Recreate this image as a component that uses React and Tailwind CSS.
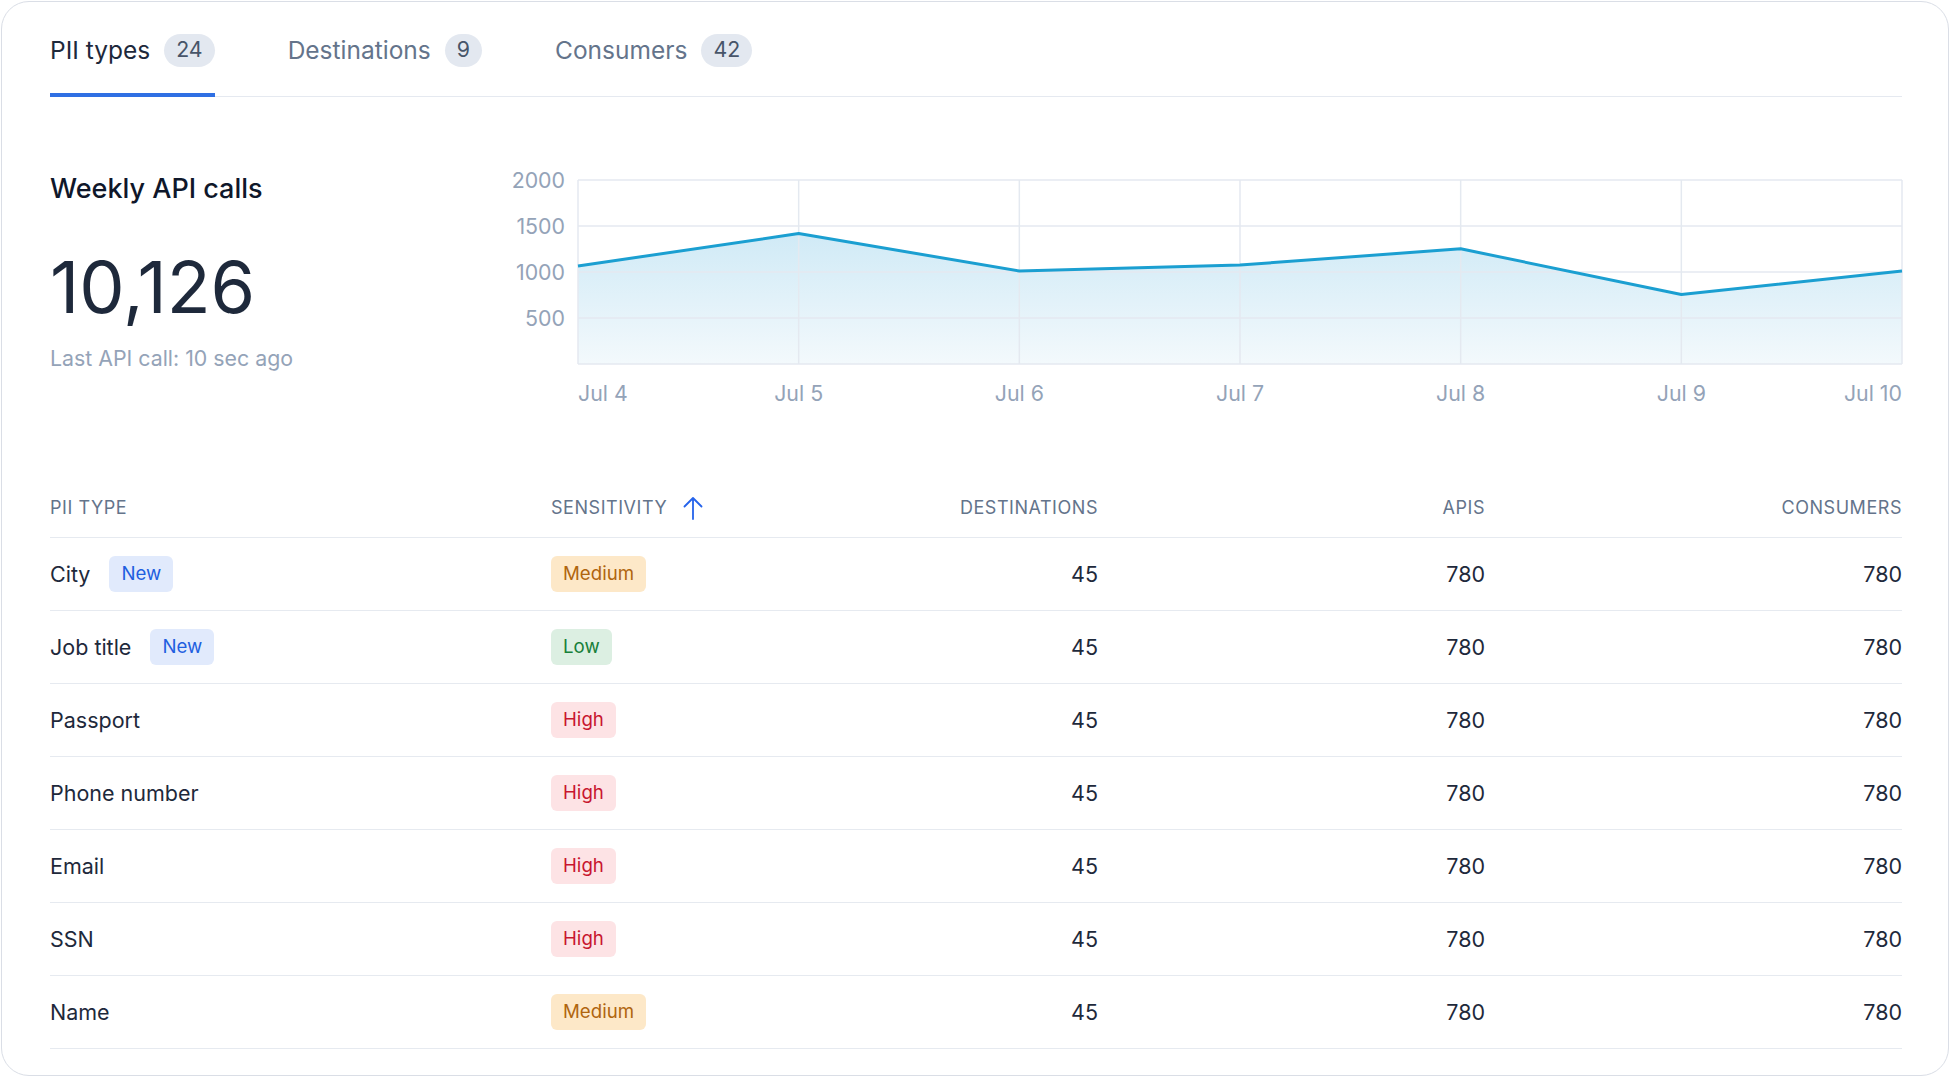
import React from "react";

const tabs = [
  { label: "PII types", count: 24, active: true },
  { label: "Destinations", count: 9 },
  { label: "Consumers", count: 42 },
];

const data = [
  { label: "Jul 4", v: 1065 },
  { label: "Jul 5", v: 1418 },
  { label: "Jul 6", v: 1011 },
  { label: "Jul 7", v: 1076 },
  { label: "Jul 8", v: 1252 },
  { label: "Jul 9", v: 756 },
  { label: "Jul 10", v: 1011 },
];

const rows = [
  { name: "City", isNew: true, s: "Medium" },
  { name: "Job title", isNew: true, s: "Low" },
  { name: "Passport", s: "High" },
  { name: "Phone number", s: "High" },
  { name: "Email", s: "High" },
  { name: "SSN", s: "High" },
  { name: "Name", s: "Medium" },
];

const sens = {
  Medium: "bg-[#fde8c8] text-[#b0650f]",
  Low: "bg-[#dcefe2] text-[#17803a]",
  High: "bg-[#fde3e5] text-[#c8162f]",
};

function SortArrow() {
  return (
    <svg width="20" height="24" viewBox="0 0 20 24" className="ml-[16px]" fill="none">
      <path
        d="M10 2 V23 M1.5 10.5 L10 2 L18.5 10.5"
        stroke="#2563eb"
        strokeWidth="1.8"
        strokeLinecap="round"
        strokeLinejoin="round"
      />
    </svg>
  );
}

function Chart() {
  const W = 1323;
  const H = 184;
  const pts = data.map((d, i) => [(i * W) / 6, H - (d.v / 2000) * H]);
  const line = pts.map((p, i) => `${i ? "L" : "M"}${p[0]},${p[1]}`).join(" ");
  const area = `${line} L${W},${H} L0,${H} Z`;
  return (
    <div className="flex-1 flex pt-[12px]">
      <div className="relative w-[60px] h-[184px] mr-[13px] text-[21.33px] leading-[24px] text-[#94a3b8]">
        {["2000", "1500", "1000", "500"].map((l, i) => (
          <div
            key={l}
            className="absolute right-0 -translate-y-1/2"
            style={{ top: `${i * 46}px` }}
          >
            {l}
          </div>
        ))}
      </div>
      <div className="flex-1 flex flex-col">
        <div className="h-[184px] w-full">
          <svg
            viewBox={`0 0 ${W} ${H}`}
            preserveAspectRatio="none"
            className="w-full h-full overflow-visible"
          >
            <defs>
              <linearGradient id="fillg" x1="0" y1="0" x2="0" y2="1">
                <stop offset="0%" stopColor="#d0eaf6" />
                <stop offset="100%" stopColor="#f3f9fc" />
              </linearGradient>
            </defs>
            <path d={area} fill="url(#fillg)" />
            {[0, 46, 92, 138, 184].map((y) => (
              <line
                key={y}
                x1="0"
                x2={W}
                y1={y}
                y2={y}
                stroke="#e4e9f0"
                strokeWidth="1.5"
                vectorEffect="non-scaling-stroke"
              />
            ))}
            {pts.map((p, i) => (
              <line
                key={i}
                x1={p[0]}
                x2={p[0]}
                y1="0"
                y2={H}
                stroke="#e4e9f0"
                strokeWidth="1.5"
                vectorEffect="non-scaling-stroke"
              />
            ))}
            <path
              d={line}
              fill="none"
              stroke="#1b9fd1"
              strokeWidth="3"
              strokeLinejoin="round"
              vectorEffect="non-scaling-stroke"
            />
          </svg>
        </div>
        <div className="relative h-[28px] mt-[15px] text-[21.33px] leading-[28px] text-[#94a3b8]">
          {data.map((d, i) => (
            <div
              key={d.label}
              className={
                i === 0
                  ? "absolute left-0"
                  : i === 6
                  ? "absolute right-0"
                  : "absolute -translate-x-1/2 whitespace-nowrap"
              }
              style={i > 0 && i < 6 ? { left: `${(i / 6) * 100}%` } : undefined}
            >
              {d.label}
            </div>
          ))}
        </div>
      </div>
    </div>
  );
}

export default function App() {
  return (
    <div
      className="h-screen w-full p-px bg-white"
      style={{ fontFamily: "Inter, 'Noto Sans', sans-serif" }}
    >
      <div className="h-full rounded-[28px] border border-[#dadee6] bg-white pl-[48px] pr-[46px] pt-[32px]">
        {/* Tabs */}
        <div className="flex gap-[73px] border-b border-[#e5e9f0]">
          {tabs.map((t) => (
            <div
              key={t.label}
              className={
                "flex items-center h-[63px] pb-[27px] -mb-px border-b-[4px] " +
                (t.active ? "border-[#2f6fe3]" : "border-transparent")
              }
            >
              <span
                className={
                  "text-[24.5px] leading-[32px] " +
                  (t.active ? "text-[#1e293b]" : "text-[#64748b]")
                }
              >
                {t.label}
              </span>
              <span className="ml-[14px] h-[33px] px-[12px] rounded-full bg-[#e3e8f0] text-[#475569] text-[21.33px] flex items-center justify-center">
                {t.count}
              </span>
            </div>
          ))}
        </div>

        {/* Stats + chart */}
        <div className="flex mt-[71px]">
          <div className="w-[455px] pt-[5px]">
            <div className="text-[27px] leading-[32px] font-medium text-[#0f172a]">
              Weekly API calls
            </div>
            <div className="mt-[46px] text-[72px] leading-[72px] text-[#1e293b]">
              10,126
            </div>
            <div className="mt-[21px] text-[21.33px] leading-[28px] text-[#94a3b8]">
              Last API call: 10 sec ago
            </div>
          </div>
          <Chart />
        </div>

        {/* Table */}
        <div className="mt-[71px]">
          <div className="grid grid-cols-[501px_299px_248px_387px_1fr] h-[60px] items-center border-b border-[#e6eaf0] text-[18px] tracking-[0.03em] uppercase text-[#64748b]">
            <div>PII type</div>
            <div className="flex items-center">
              <span>Sensitivity</span>
              <SortArrow />
            </div>
            <div className="text-right">Destinations</div>
            <div className="text-right">APIs</div>
            <div className="text-right">Consumers</div>
          </div>
          {rows.map((r) => (
            <div
              key={r.name}
              className="grid grid-cols-[501px_299px_248px_387px_1fr] h-[73px] items-center border-b border-[#e6eaf0] text-[21.5px] text-[#1e293b]"
            >
              <div className="flex items-center">
                <span>{r.name}</span>
                <>
                  {r.isNew && (
                    <span className="ml-[19px] h-[36px] px-[12px] rounded-[6px] bg-[#e1eafc] text-[#1f5fe0] text-[18.67px] flex items-center">
                      New
                    </span>
                  )}
                </>
              </div>
              <div>
                <span
                  className={
                    "inline-flex items-center h-[36px] px-[12px] rounded-[6px] text-[18.67px] " +
                    sens[r.s]
                  }
                >
                  {r.s}
                </span>
              </div>
              <div className="text-right">45</div>
              <div className="text-right">780</div>
              <div className="text-right">780</div>
            </div>
          ))}
        </div>
      </div>
    </div>
  );
}
